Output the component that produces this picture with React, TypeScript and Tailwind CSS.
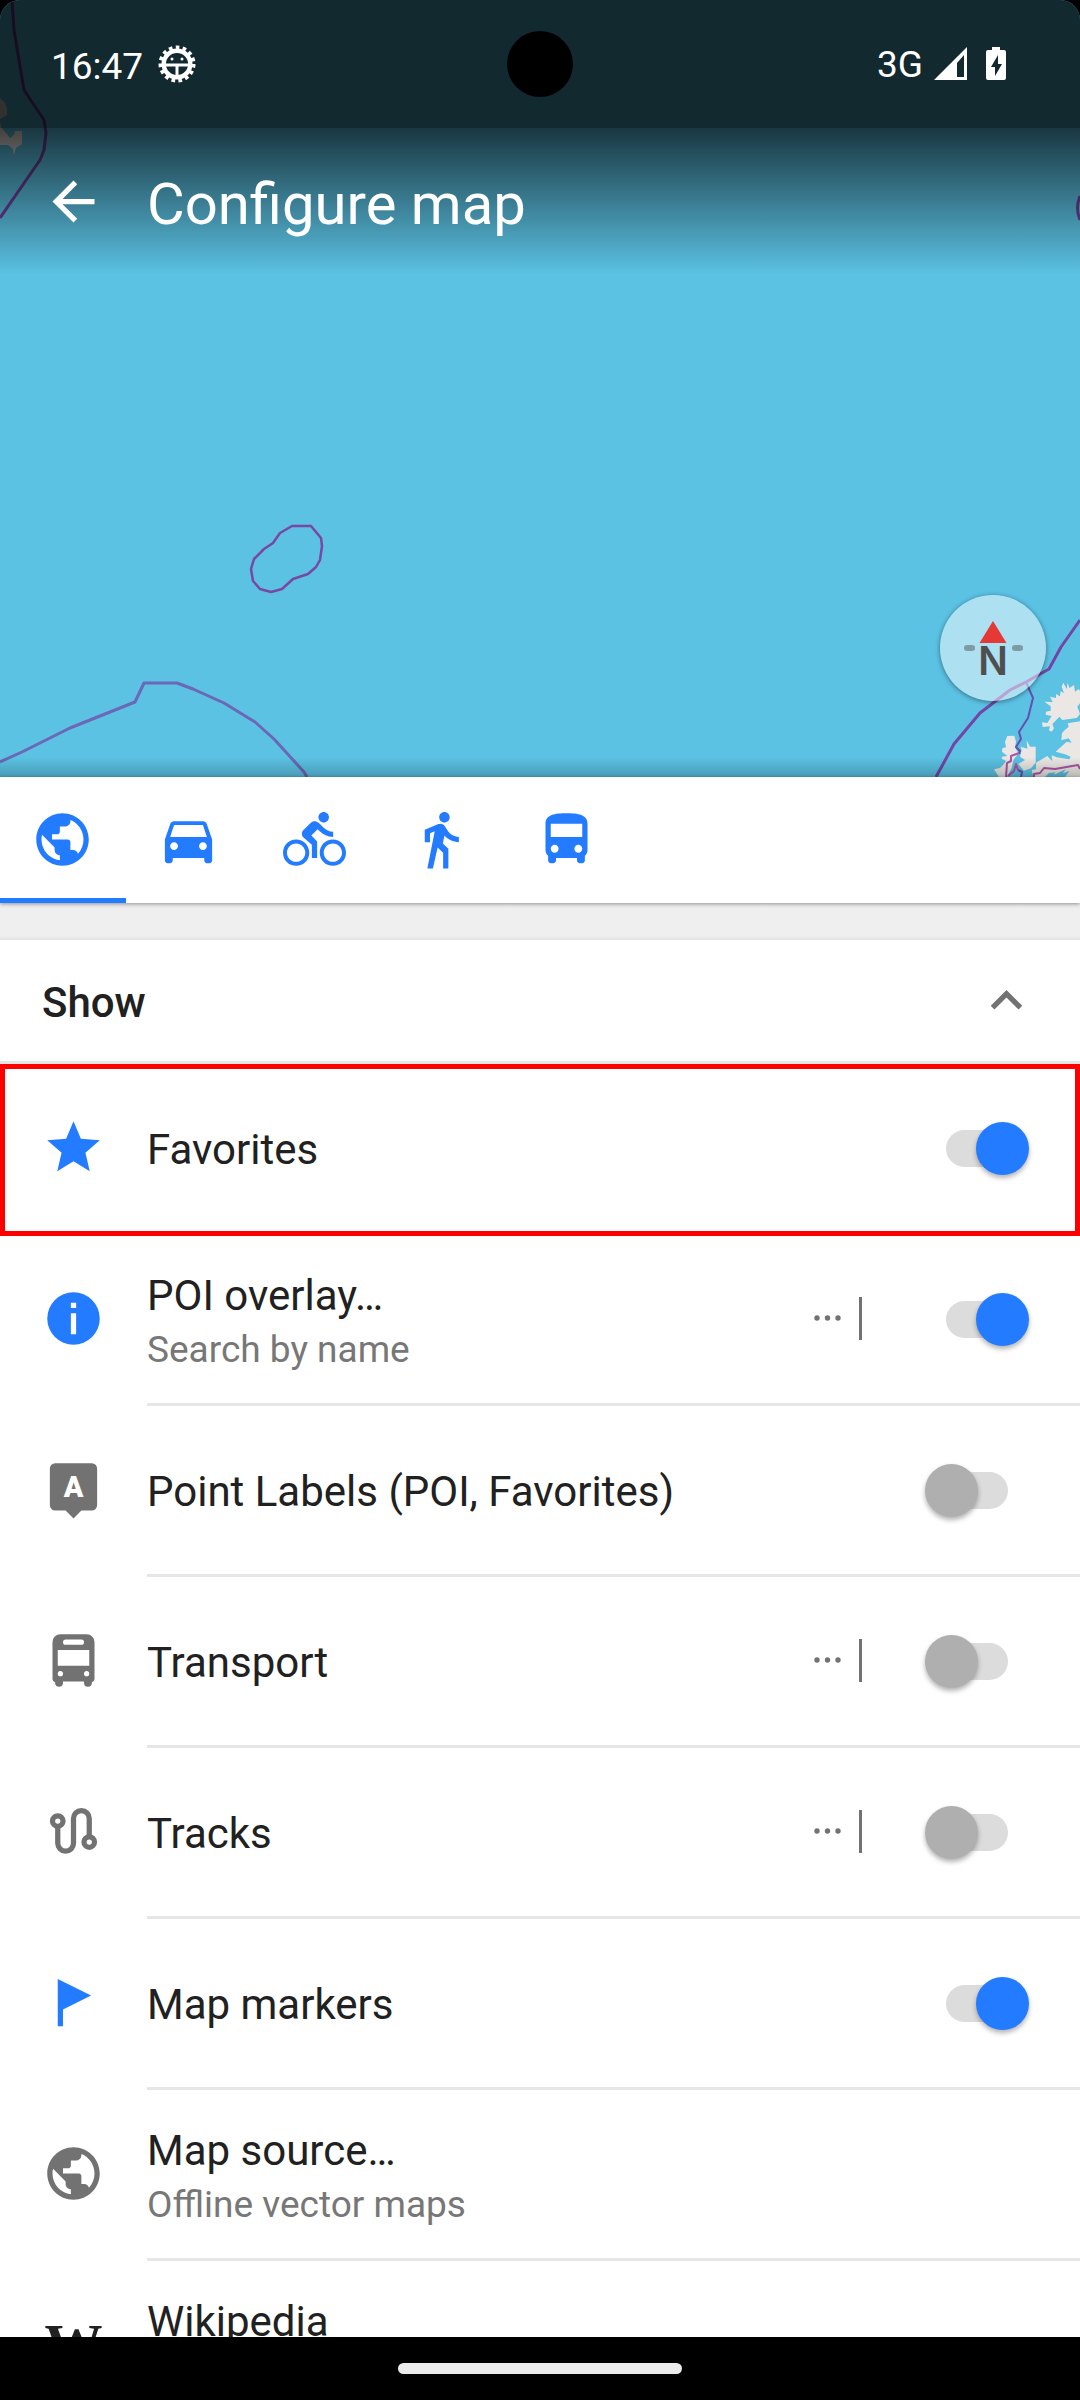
import { useId, useState, type ReactNode } from "react";
import {
  MdArrowBack,
  MdDirectionsBike,
  MdDirectionsBus,
  MdDirectionsCar,
  MdDirectionsWalk,
  MdExpandLess,
  MdPublic,
  MdStar,
} from "react-icons/md";

const ICON = "size-[63px] shrink-0";

function MapCanvas() {
  return (
    <svg
      className="absolute inset-0 size-full"
      viewBox="0 0 1080 777"
      preserveAspectRatio="xMidYMax slice"
      fill="none"
      aria-hidden="true"
    >
      <g fill="#eae7e4">
        <path d="M0 98l5 5 2 5v7l-7 4z" />
        <path d="M0 121l1 6 9 11 4-3 1-4h7v13l-6 4-2 7-1-6-5-4H0z" />
      </g>
      <g transform="translate(800 560) scale(.33333)" fill="#eae7e4">
        <path d="M790 368l10 19 3-19 5 16 14-9 3 20 11-8 4 5v38l-8 10 8 22-10 12-43 6-9-10-21 23 5 12-7 10-8-4 3-12-22 2-2-14 16 2 13-21-18-4 1-9 14-3v-13l-19-14 25 1-8-16 18 4v-12l12 7 2-15 10 5-7-19z" />
        <path d="M840 484l-37 6 3 10-14 12-6 8-2 21 22-6 9 13-15-3-33 30 28 8 17 7-4 8-38-6-15-6 2 18-15-16-34 20v20l-13 2 10 40h135z" />
        <path d="M622 528l21-1 5 18-3 17 10 18-15 20-5 25-15 26h-23l-15-23 18-4 12-12 6-10-13-6 1-6 16-2-16-13 1-10 11-3-3-17z" />
        <path d="M680 541l10 19h17v48l-14 17-21 7-17-20 20-12-15-10 5-20-3-10 20 6z" />
        <path d="M735 651l12-12 20-2-6 8 16-8 20-9-8 12 20-8-14 19z" fill="#5bc2e4" />
      </g>
      <g strokeLinejoin="round">
        <path
          d="M12 0l2 30 10 60 20 30 2 13-2 17-4 10L0 218M1080 196q-5 12 0 24"
          stroke="#6d3f9c"
          strokeWidth="3"
        />
        <path
          d="M292 526h19l10 12 1 8-2 14-4 7-8 7-15 5-11 10-11 3-11-3-7-8-2-12 3-10 10-10 9-6 7-10z"
          stroke="#7948a2"
          strokeWidth="2.5"
        />
        <path
          d="M0 762l22-10 48-24 65-26 9-19h33l16 6 31 14 31 19 19 17 30 33 3 5"
          stroke="#6c67b6"
          strokeWidth="3"
        />
        <path
          d="M936 777l18-33 26-31 30-23 16-8 23-13 12-22 19-27"
          stroke="#7445a6"
          strokeWidth="3"
        />
        <path d="M1026 682l7 16-5 20-9 14 2 7-5 8 4 4-1 3M1018 770l4 2-1 5" stroke="#6450ae" strokeWidth="2" />
        <path
          d="M1019 753l-8 3v5l-4 2-1 14M1008 776l6-5 2-7 2 6M1034 777v-3l6-1 4-5 11 1 23-4 2 4"
          stroke="#ab55a4"
          strokeWidth="2"
        />
      </g>
    </svg>
  );
}

function DebugIcon() {
  return (
    <svg className="size-10" viewBox="0 0 40 40" fill="none" stroke="#fff" aria-hidden="true">
      <circle cx="20" cy="20" r="13.3" strokeWidth="4.4" />
      <circle cx="20" cy="20" r="16.500" strokeWidth="4" strokeDasharray="3.6 3.310" />
      <path d="M7 21h26M20 21v12" strokeWidth="3" />
      <g fill="#fff" stroke="none">
        <circle cx="15" cy="15" r="1.5" />
        <circle cx="25" cy="15" r="1.5" />
      </g>
    </svg>
  );
}

function StatusBar() {
  return (
    <div className="relative flex h-32 items-center justify-between bg-black/79 pr-[73px] pl-[51px] text-white">
      <div className="flex items-center gap-3.5">
        <span className="pt-1 text-[37px] leading-none">16:47</span>
        <DebugIcon />
      </div>
      <span className="absolute top-[31px] left-1/2 size-[66px] -translate-x-1/2 rounded-full bg-black" />
      <div className="flex items-center">
        <span className="mr-2.5 text-[37px] leading-none">3G</span>
        <svg className="mr-[17px] h-[34px] w-[35px]" viewBox="0 0 35 34" aria-hidden="true">
          <path d="M1 33L34 0v33zM24 30h7V8l-7 8z" fill="#fff" fillRule="evenodd" />
        </svg>
        <svg className="h-[34px] w-[22px]" viewBox="0 0 22 34" aria-hidden="true">
          <path
            d="M7 0h8v3h4q2 0 2 2v26q0 2-2 2H3q-2 0-2-2V5q0-2 2-2h4zM13 8l-7 12h4v9l7-12h-4z"
            fill="#fff"
            fillRule="evenodd"
          />
        </svg>
      </div>
    </div>
  );
}

function Compass() {
  return (
    <button
      aria-label="Reset map rotation"
      className="absolute right-[34px] bottom-[76px] size-[106px] rounded-full bg-white/50 shadow-[0_1px_5px_rgba(0,0,0,0.45)]"
    >
      <svg className="size-full" viewBox="0 0 106 106" aria-hidden="true">
        <path d="M53 26l13.500 22h-27z" fill="#e53935" />
        <rect x="24" y="50" width="11" height="6" rx="3" fill="#7f9ba3" />
        <rect x="72" y="50" width="11" height="6" rx="3" fill="#7f9ba3" />
        <text
          x="53"
          y="80"
          textAnchor="middle"
          fontFamily="Inter, sans-serif"
          fontWeight="600"
          fontSize="39"
          fill="#4f4f4f"
        >
          N
        </text>
      </svg>
    </button>
  );
}

const profiles = [
  { name: "Browse map", Icon: MdPublic },
  { name: "Driving", Icon: MdDirectionsCar },
  { name: "Cycling", Icon: MdDirectionsBike },
  { name: "Walking", Icon: MdDirectionsWalk },
  { name: "Public transport", Icon: MdDirectionsBus },
];

function ProfileTabs() {
  const [active, setActive] = useState(0);
  return (
    <nav className="relative z-10 flex h-[126px] shrink-0 bg-white shadow-[0_1px_4px_rgba(0,0,0,0.4)]">
      {profiles.map(({ name, Icon }, i) => (
        <button
          key={name}
          aria-label={name}
          aria-pressed={i === active}
          onClick={() => setActive(i)}
          className="relative flex w-[126px] items-center justify-center pr-0.5 pb-0.5 text-[#237bff]"
        >
          <Icon className={ICON} />
          {i === active && <span className="absolute inset-x-0 bottom-0 h-[5px] bg-[#237bff]" />}
        </button>
      ))}
    </nav>
  );
}

function InfoIcon() {
  return (
    <svg className={ICON} viewBox="0 0 24 24" fill="currentColor" fillRule="evenodd" aria-hidden="true">
      <path d="M12 2a10 10 0 1 0 0 20 10 10 0 0 0 0-20zM11 6h2v2h-2zM11 10h2v8h-2z" />
    </svg>
  );
}

function LabelIcon() {
  return (
    <svg className={ICON} viewBox="0 0 24 24" fill="currentColor" aria-hidden="true">
      <path d="M5 2h14a2 2 0 0 1 2 2v14a2 2 0 0 1-2 2h-4l-3 3-3-3H5a2 2 0 0 1-2-2V4a2 2 0 0 1 2-2z" />
      <text x="12" y="15" textAnchor="middle" fontSize="11" fontWeight="900" fill="#fff">
        A
      </text>
    </svg>
  );
}

function TransportIcon() {
  return (
    <svg className={ICON} viewBox="0 0 24 24" fill="currentColor" fillRule="evenodd" aria-hidden="true">
      <path d="M7 2h10a3 3 0 0 1 3 3v14q0 .8-1 1.300v.2a1.500 1.500 0 0 1-3 0V20H8v.5a1.500 1.500 0 0 1-3 0v-.2Q4 19.800 4 19V5a3 3 0 0 1 3-3zM9 4a1 1 0 0 0 0 2h6a1 1 0 0 0 0-2zM6 8v6h12V8zM7 16a1 1 0 1 0 0 2 1 1 0 0 0 0-2zM17 16a1 1 0 1 0 0 2 1 1 0 0 0 0-2z" />
    </svg>
  );
}

function TracksIcon() {
  return (
    <svg className={ICON} viewBox="0 0 24 24" fill="none" stroke="currentColor" strokeWidth="2" aria-hidden="true">
      <circle cx="6" cy="8" r="2" />
      <circle cx="18" cy="16" r="2" />
      <path d="M6 10v6.500a3 3 0 0 0 6 0V7a3 3 0 0 1 6 0v7" />
    </svg>
  );
}

function FlagIcon() {
  return (
    <svg className={ICON} viewBox="0 0 24 24" fill="currentColor" aria-hidden="true">
      <path d="M6 3l12.700 6.300L8 14.700V21H6z" />
    </svg>
  );
}

function Switch({ id, defaultChecked }: { id: string; defaultChecked: boolean }) {
  return (
    <span className="relative flex h-[53px] w-[104px] shrink-0 items-center justify-center">
      <input
        id={id}
        type="checkbox"
        role="switch"
        defaultChecked={defaultChecked}
        className="peer absolute inset-0 z-10 cursor-pointer appearance-none"
      />
      <span className="h-[37px] w-[62px] rounded-full bg-[#dcdcdc]" />
      <span className="absolute top-0 left-0 size-[53px] rounded-full bg-[#afafaf] shadow-[0_3px_5px_rgba(0,0,0,0.3)] peer-checked:right-0 peer-checked:left-auto peer-checked:bg-[#237bff]" />
    </span>
  );
}

type Item = {
  title: string;
  subtitle?: string;
  icon: ReactNode;
  on?: boolean;
  more?: boolean;
  active?: boolean;
  highlighted?: boolean;
};

const items: Item[] = [
  { title: "Favorites", icon: <MdStar className={ICON} />, on: true, active: true, highlighted: true },
  { title: "POI overlay…", subtitle: "Search by name", icon: <InfoIcon />, on: true, active: true, more: true },
  { title: "Point Labels (POI, Favorites)", icon: <LabelIcon />, on: false },
  { title: "Transport", icon: <TransportIcon />, on: false, more: true },
  { title: "Tracks", icon: <TracksIcon />, on: false, more: true },
  { title: "Map markers", icon: <FlagIcon />, on: true, active: true },
  { title: "Map source…", subtitle: "Offline vector maps", icon: <MdPublic className={ICON} /> },
  {
    title: "Wikipedia",
    subtitle: "All languages",
    icon: (
      <span className="flex size-[63px] shrink-0 items-center justify-center font-['Liberation_Serif',serif] text-[58px] leading-none font-bold text-[#212121]">
        W
      </span>
    ),
  },
];

function Row({ item }: { item: Item }) {
  const id = useId();
  return (
    <li className="relative flex gap-[42px] pl-[42px]">
      <span className={item.active ? "flex items-center pb-1 text-[#237bff]" : "flex items-center pb-1 text-[#727272]"}>
        {item.icon}
      </span>
      <div className="flex h-[171px] min-w-0 flex-1 items-center border-b-[3px] border-[#e6e6e6] pr-[51px]">
        <label htmlFor={id} className="min-w-0 flex-1 pt-1">
          <span className="block truncate text-[42px] leading-[58px] text-[#212121]">{item.title}</span>
          {item.subtitle && (
            <span className="block truncate text-[37px] leading-[50px] text-[#777777]">{item.subtitle}</span>
          )}
        </label>
        {item.more && (
          <button aria-label={`${item.title} options`} className="mr-[63px] flex items-center gap-[18px] pb-0.5">
            <svg className="h-1.5 w-[27px]" viewBox="0 0 27 6" fill="#727272" aria-hidden="true">
              <circle cx="3" cy="3" r="2.700" />
              <circle cx="13.500" cy="3" r="2.700" />
              <circle cx="24" cy="3" r="2.700" />
            </svg>
            <span className="h-[43px] w-[3px] bg-[#727272]" />
          </button>
        )}
        {item.on !== undefined && <Switch id={id} defaultChecked={item.on} />}
      </div>
      {item.highlighted && (
        <span className="pointer-events-none absolute inset-x-0 top-0 -bottom-px z-10 border-[5px] border-[#ff0000]" />
      )}
    </li>
  );
}

export default function App() {
  return (
    <div className="flex h-screen flex-col bg-black font-['Roboto',sans-serif]">
      <header className="relative h-[777px] shrink-0 overflow-hidden rounded-t-[20px] bg-[#5bc2e4]">
        <MapCanvas />
        <StatusBar />
        <div className="relative flex h-[147px] items-center gap-[42px] bg-linear-to-b from-black/72 to-transparent px-[42px] text-white">
          <button aria-label="Back">
            <MdArrowBack className={ICON} />
          </button>
          <h1 className="pt-1 text-[58px] leading-none">Configure map</h1>
        </div>
        <Compass />
        <div className="absolute inset-x-0 bottom-0 h-5 bg-linear-to-t from-black/20 to-transparent" />
      </header>
      <ProfileTabs />
      <main className="min-h-0 flex-1 overflow-y-auto bg-white [scrollbar-width:none]">
        <div className="h-[37px] bg-linear-to-b from-[#efefef] from-90% to-[#e2e2e2]" />
        <h2 className="border-b-[3px] border-[#e6e6e6] text-[42px] font-medium text-[#212121]">
          <button aria-expanded="true" className="flex h-[121px] w-full items-center justify-between px-[42px]">
            <span className="pt-1">Show</span>
            <MdExpandLess className="size-[63px] text-[#727272]" aria-hidden="true" />
          </button>
        </h2>
        <ul>
          {items.map((item) => (
            <Row key={item.title} item={item} />
          ))}
        </ul>
      </main>
      <footer className="flex h-[63px] shrink-0 items-center justify-center bg-black">
        <span className="h-[11px] w-[284px] rounded-full bg-[#ebebeb]" />
      </footer>
    </div>
  );
}
